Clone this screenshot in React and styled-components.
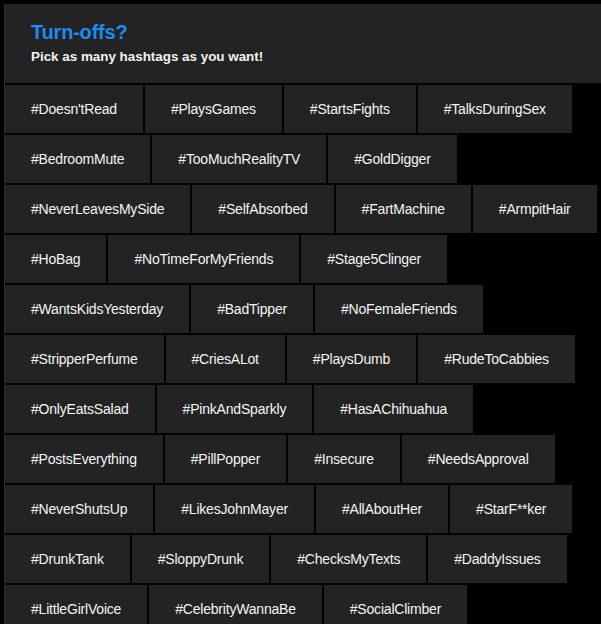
import React from "react";
import styled, { createGlobalStyle } from "styled-components";

const Global = createGlobalStyle`
  html, body {
    margin: 0;
    padding: 0;
    background: #000;
    overflow: hidden;
  }
  body {
    font-family: "Liberation Sans", Arial, Helvetica, sans-serif;
  }
`;

const Page = styled.div`
  min-height: 100vh;
  background: #000;
  padding: 4px 0 0 4px;
  box-sizing: border-box;
`;

const Panel = styled.div`
  display: flex;
  flex-direction: column;
  gap: 2px;
  border-left: 1px solid #2c2c2c;
  background: #000;
`;

const Header = styled.header`
  height: 79px;
  box-sizing: border-box;
  padding: 16px 26px 0 26px;
  background: #232323;
`;

const Title = styled.h1`
  margin: 0;
  font-size: 20px;
  line-height: 24px;
  font-weight: 700;
  color: #1a8cf2;
  letter-spacing: -0.2px;
`;

const Subtitle = styled.p`
  margin: 5px 0 0 0;
  font-size: 13.4px;
  line-height: 16px;
  font-weight: 700;
  color: #f2f2f2;
`;

const Row = styled.div`
  display: flex;
  gap: 2px;
`;

const Tag = styled.button`
  height: 48px;
  padding: 0 26px;
  border: none;
  border-radius: 0;
  background: #232323;
  color: #f4f4f4;
  font-family: "Liberation Sans", Arial, Helvetica, sans-serif;
  font-size: 14px;
  letter-spacing: -0.2px;
  line-height: 47px;
  white-space: nowrap;
  cursor: pointer;
  flex: none;
`;

const rows = [
  ["#Doesn'tRead", "#PlaysGames", "#StartsFights", "#TalksDuringSex"],
  ["#BedroomMute", "#TooMuchRealityTV", "#GoldDigger"],
  ["#NeverLeavesMySide", "#SelfAbsorbed", "#FartMachine", "#ArmpitHair"],
  ["#HoBag", "#NoTimeForMyFriends", "#Stage5Clinger"],
  ["#WantsKidsYesterday", "#BadTipper", "#NoFemaleFriends"],
  ["#StripperPerfume", "#CriesALot", "#PlaysDumb", "#RudeToCabbies"],
  ["#OnlyEatsSalad", "#PinkAndSparkly", "#HasAChihuahua"],
  ["#PostsEverything", "#PillPopper", "#Insecure", "#NeedsApproval"],
  ["#NeverShutsUp", "#LikesJohnMayer", "#AllAboutHer", "#StarF**ker"],
  ["#DrunkTank", "#SloppyDrunk", "#ChecksMyTexts", "#DaddyIssues"],
  ["#LittleGirlVoice", "#CelebrityWannaBe", "#SocialClimber"],
];

export default function App() {
  return (
    <Page>
      <Global />
      <Panel>
        <Header>
          <Title>Turn-offs?</Title>
          <Subtitle>Pick as many hashtags as you want!</Subtitle>
        </Header>
        {rows.map((r, i) => (
          <Row key={i}>
            {r.map((t) => (
              <Tag key={t}>{t}</Tag>
            ))}
          </Row>
        ))}
      </Panel>
    </Page>
  );
}
